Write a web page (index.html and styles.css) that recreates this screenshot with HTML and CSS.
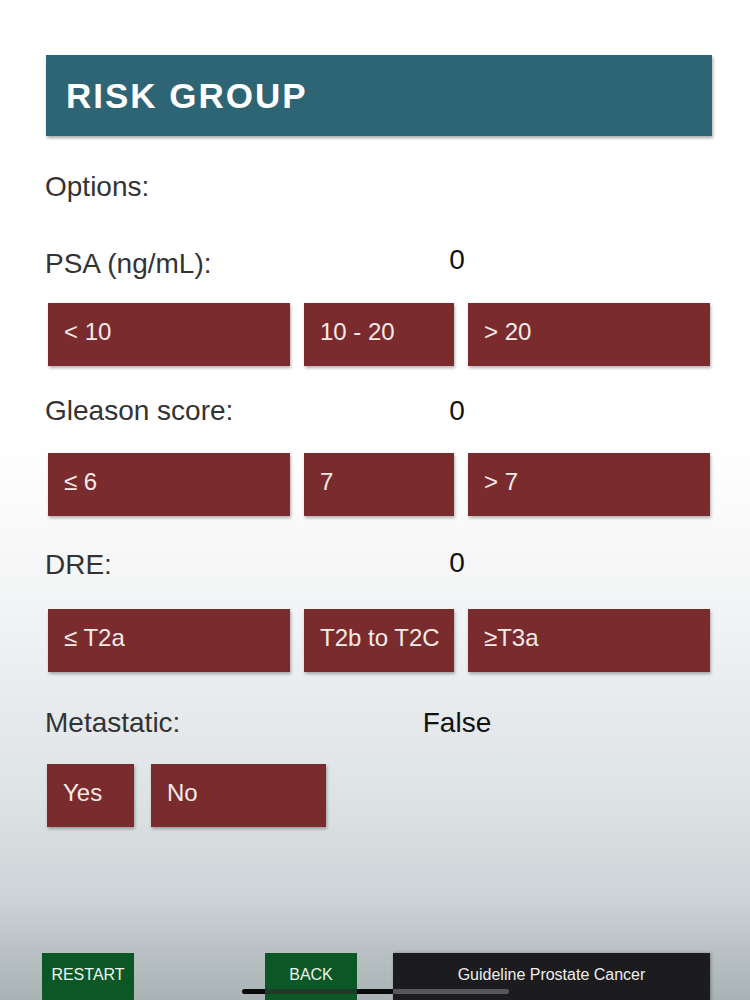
FILE: index.html
```html
<!DOCTYPE html>
<html lang="en">
<head>
<meta charset="utf-8">
<title>Risk Group</title>
<link rel="stylesheet" href="styles.css">
</head>
<body>
<div class="page">
  <header class="title-bar"><h1>RISK GROUP</h1></header>

  <div class="label-row options"><span class="label">Options:</span></div>

  <div class="label-row psa"><span class="label">PSA (ng/mL):</span><span class="value raised">0</span></div>
  <div class="btn-grid row1">
    <div class="opt">&lt; 10</div>
    <div class="opt">10 - 20</div>
    <div class="opt">&gt; 20</div>
  </div>

  <div class="label-row gleason"><span class="label">Gleason score:</span><span class="value">0</span></div>
  <div class="btn-grid row2">
    <div class="opt">≤ 6</div>
    <div class="opt">7</div>
    <div class="opt">&gt; 7</div>
  </div>

  <div class="label-row dre"><span class="label">DRE:</span><span class="value raised-s">0</span></div>
  <div class="btn-grid row3">
    <div class="opt">≤ T2a</div>
    <div class="opt">T2b to T2C</div>
    <div class="opt">≥T3a</div>
  </div>

  <div class="label-row meta"><span class="label">Metastatic:</span><span class="value">False</span></div>
  <div class="yn-row">
    <div class="opt yes">Yes</div>
    <div class="opt no">No</div>
  </div>

  <footer class="footer">
    <div class="foot-btn green restart">RESTART</div>
    <div class="foot-btn green back">BACK</div>
    <div class="foot-btn dark guide">Guideline Prostate Cancer</div>
  </footer>
  <div class="home-indicator"></div>
</div>
</body>
</html>
```

FILE: styles.css
```css
html, body {
  margin: 0;
  padding: 0;
}
body {
  width: 750px;
  height: 1000px;
  overflow: hidden;
  font-family: "Liberation Sans", Arial, sans-serif;
  background: linear-gradient(to bottom,
    #ffffff 0px,
    #ffffff 440px,
    #f3f4f5 600px,
    #e8ebed 700px,
    #dde3e5 800px,
    #ccd3d6 900px,
    #b9c1c4 950px,
    #a9b2b5 1000px);
}
.page {
  position: relative;
  height: 1000px;
  padding-top: 55px;
  box-sizing: border-box;
}
.title-bar {
  margin-left: 46px;
  width: 666px;
  height: 81px;
  background: #2e6575;
  box-shadow: 1px 2px 3px rgba(0,0,0,0.35);
  display: flex;
  align-items: center;
  padding-left: 20px;
  box-sizing: border-box;
}
.title-bar h1 {
  margin: 0;
  color: #ffffff;
  font-size: 35px;
  font-weight: bold;
  letter-spacing: 2px;
  line-height: 40px;
}
.label-row {
  display: flex;
  height: 32px;
  line-height: 32px;
  font-size: 28px;
  padding-left: 45px;
}
.label {
  width: 355px;
  color: #333333;
}
.value {
  width: 114px;
  text-align: center;
  color: #111111;
}
.raised { margin-top: -4px; }
.raised-s { margin-top: -2px; }
.options { margin-top: 35px; }
.psa { margin-top: 45px; }
.gleason { margin-top: 29px; }
.dre { margin-top: 33px; }
.meta { margin-top: 35px; }

.btn-grid {
  display: grid;
  grid-template-columns: 242px 150px 242px;
  column-gap: 14px;
  margin-left: 48px;
}
.row1 { margin-top: 23px; }
.row2 { margin-top: 26px; }
.row3 { margin-top: 28px; }

.opt {
  height: 63px;
  background: #7a2b2e;
  color: #f5ebe6;
  font-size: 24px;
  display: flex;
  align-items: center;
  padding: 0 0 5px 16px;
  box-sizing: border-box;
  box-shadow: 1px 2px 3px rgba(0,0,0,0.3);
  white-space: nowrap;
}
.yn-row {
  display: flex;
  gap: 17px;
  margin-left: 47px;
  margin-top: 25px;
}
.yes { width: 87px; }
.no { width: 175px; }

.footer {
  display: flex;
  margin-top: 126px;
  margin-left: 42px;
}
.foot-btn {
  height: 60px;
  padding-top: 12px;
  box-sizing: border-box;
  font-size: 16px;
  line-height: 20px;
  text-align: center;
  color: #eef3ee;
}
.green { background: #0b5826; width: 92px; }
.back { margin-left: 131px; }
.dark { background: #1c1c1e; width: 317px; margin-left: 36px; color: #eeeeee; box-shadow: 1px 0 3px rgba(0,0,0,0.3); }

.home-indicator {
  position: absolute;
  left: 242px;
  top: 989px;
  width: 267px;
  height: 5px;
  border-radius: 3px;
  background: linear-gradient(to right,
    #0a0a0a 0px, #0a0a0a 23px,
    #1f3a28 23px, #1f3a28 115px,
    #0a0a0a 115px, #0a0a0a 151px,
    #55575a 151px, #55575a 267px);
}
```
